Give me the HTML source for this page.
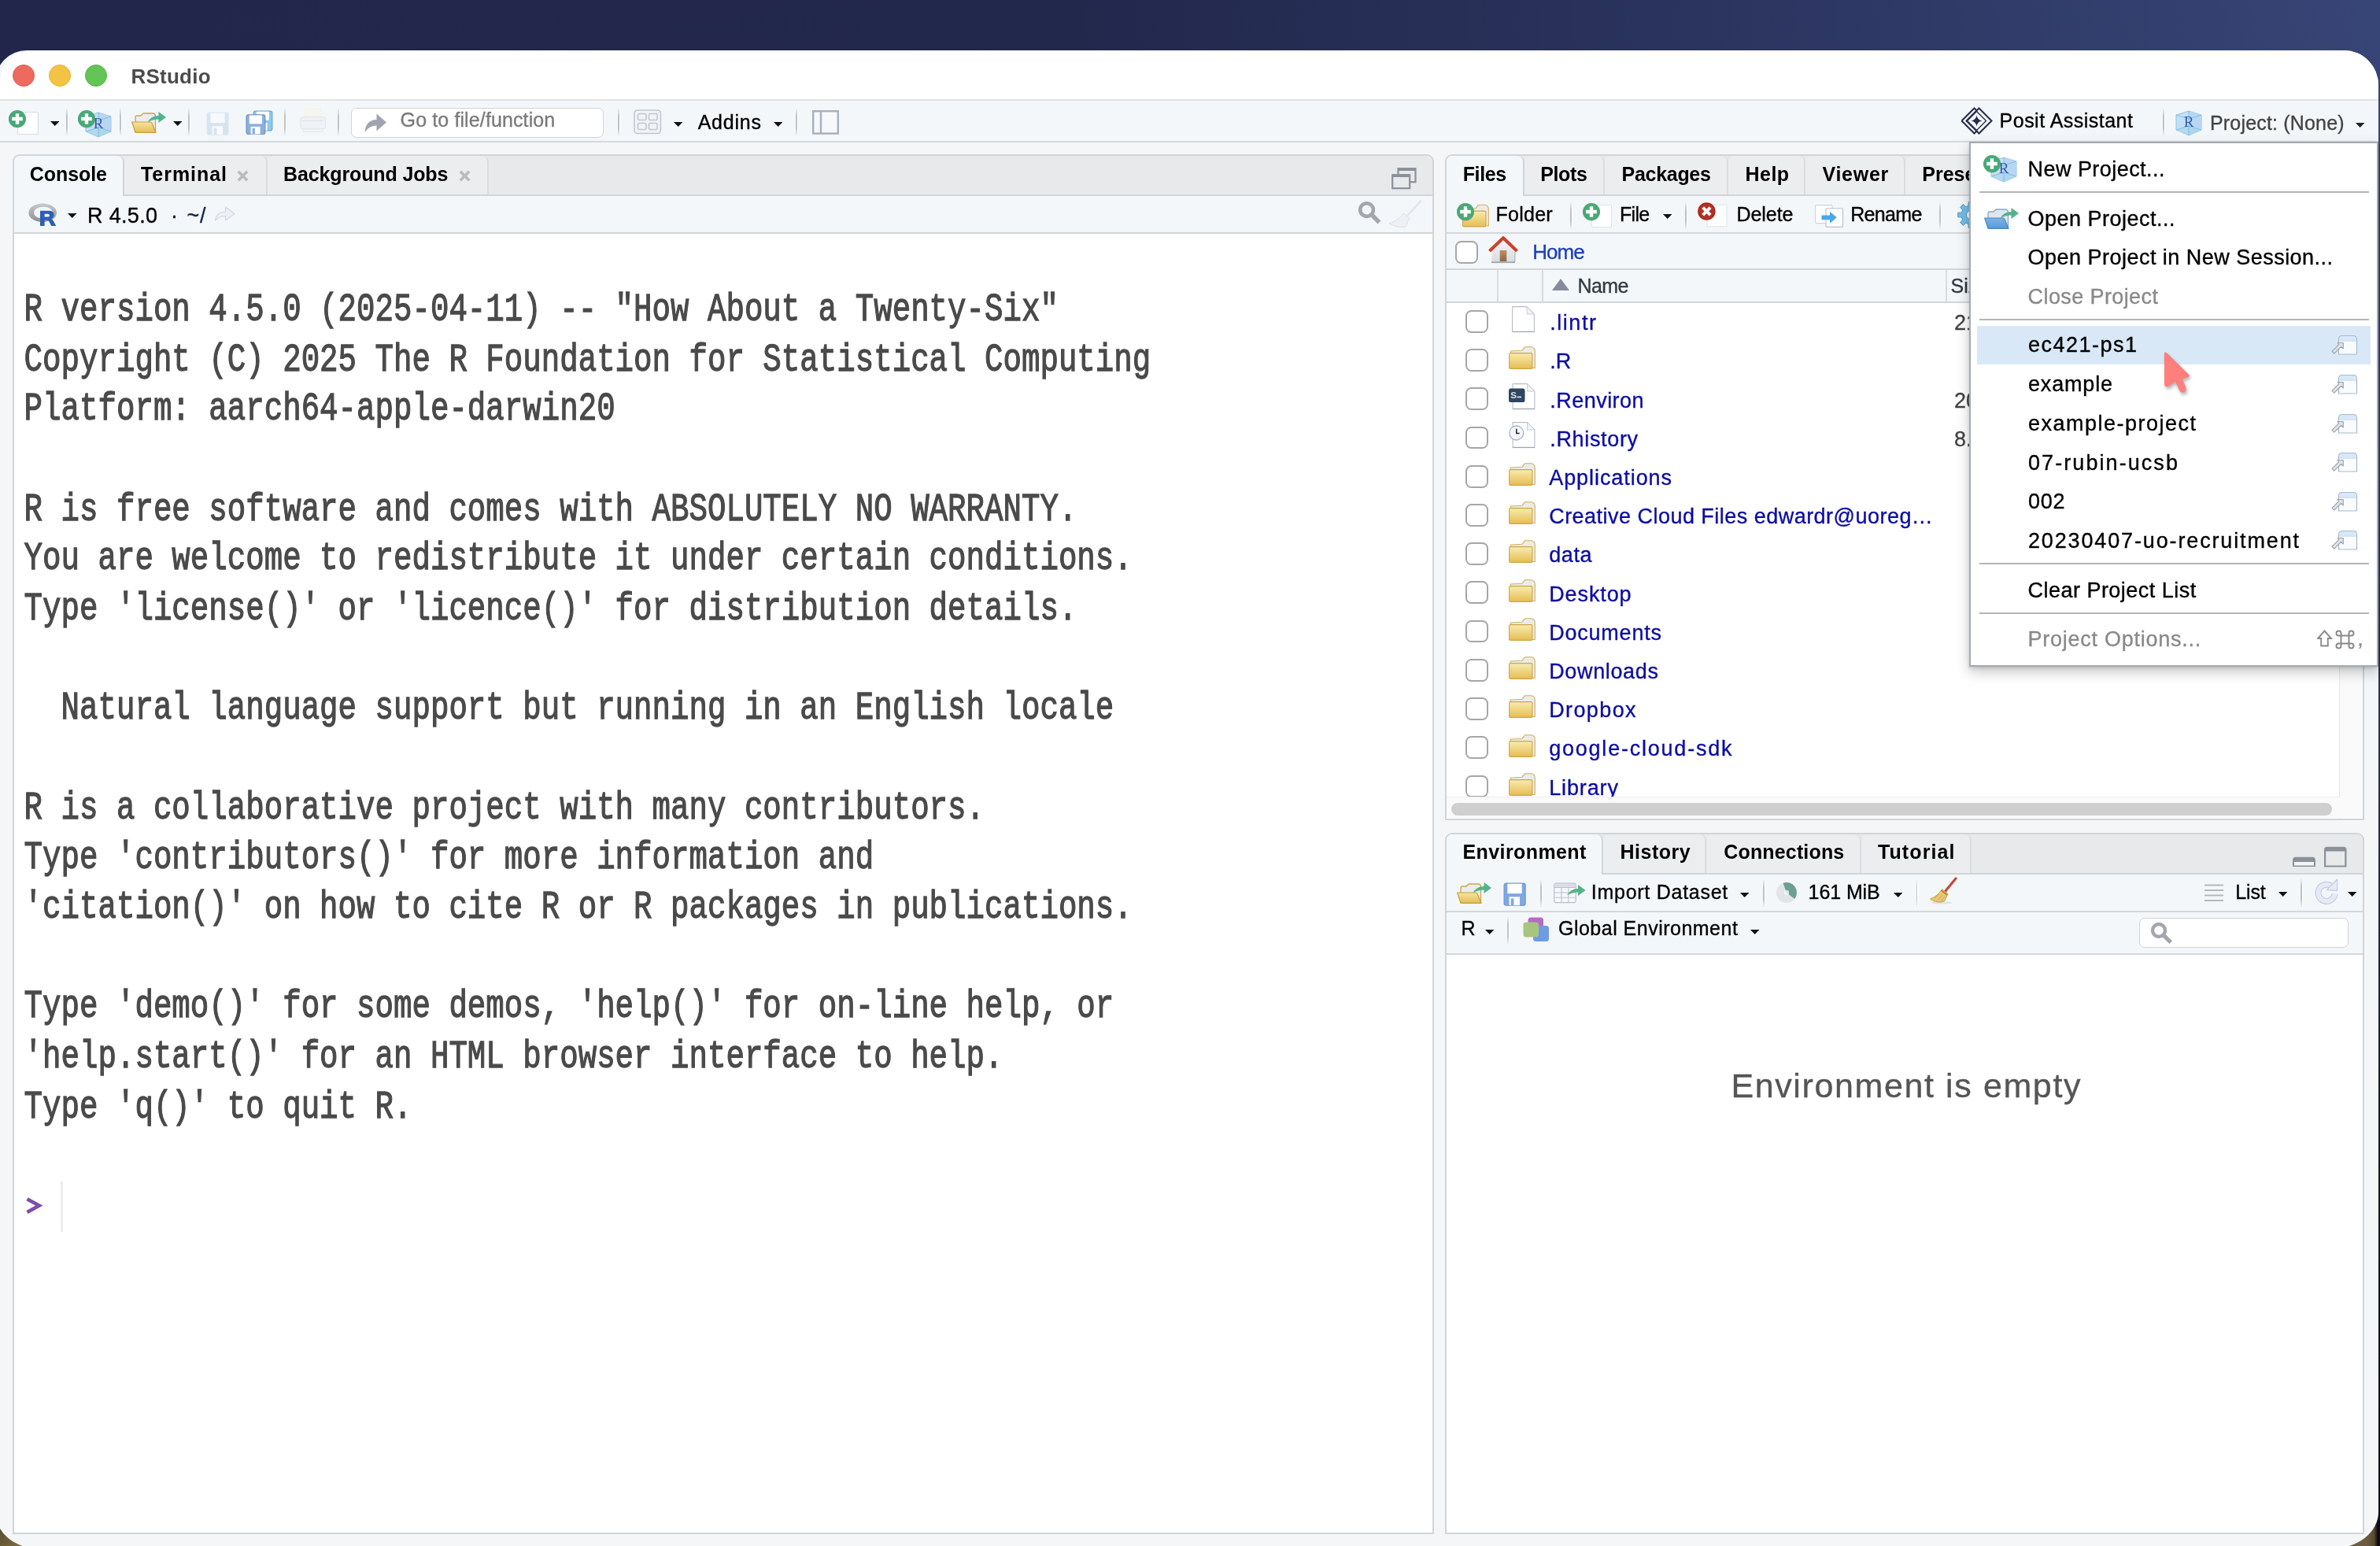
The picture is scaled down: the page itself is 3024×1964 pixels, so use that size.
<!DOCTYPE html>
<html><head><meta charset="utf-8"><title>RStudio</title>
<style>
html,body{margin:0;padding:0}
body{width:3024px;height:1964px;overflow:hidden;position:relative;font-family:"Liberation Sans",sans-serif;
background:linear-gradient(90deg,#21264a 0%,#22284c 45%,#2a335d 70%,#36437300 100%),linear-gradient(180deg,#374576 0%,#34416f 30%,#1a1d2a 70%,#0c0d11 100%);}
.t{position:absolute;white-space:nowrap;line-height:normal;font-family:"Liberation Sans",sans-serif}
#win{position:absolute;left:-6px;top:63.5px;width:3028px;height:1903px;border-radius:40px 44px 58px 54px/40px 44px 46px 46px;background:#f4f6f8;overflow:hidden}
#app{position:absolute;left:0;top:0;width:3024px;height:1964px;will-change:transform}
.pane{position:absolute;border:2px solid #d1d5d9;box-sizing:border-box;background:#fff;overflow:hidden;border-radius:9px 9px 0 0}
.strip{position:absolute;left:0;top:0;right:0;height:49px;background:#e8e9eb;border-bottom:2px solid #d1d5d9}
.tab{position:absolute;top:0;height:49px;box-sizing:border-box;background:#ecedef;border-right:2px solid #d9dcdf;border-radius:8px 8px 0 0}
.tab.on{background:#f4f7f9;height:51px;border-right:2px solid #d1d5d9}
.bar{position:absolute;left:0;right:0;background:#f4f7f9;border-bottom:2px solid #d3d7db;box-sizing:border-box}
#con{position:absolute;left:0;top:0;transform-origin:0 0;font-family:"Liberation Mono",monospace;white-space:pre;color:#4a4a4a;-webkit-text-stroke:1px #4a4a4a}
</style></head><body>
<div style="position:absolute;left:0px;top:1900px;width:80px;height:64px;background:linear-gradient(135deg,#3a3020,#7a6a42 60%,#a08a5a);"></div>
<div style="position:absolute;left:2950px;top:1890px;width:74px;height:74px;background:linear-gradient(90deg,#77664a 0%,#6a5a40 80%,#57492f 90%,#0c0d12 96%);"></div>
<div id="win"></div>
<div id="app">
<div style="position:absolute;left:0px;top:63.5px;width:3022px;height:63px;background:#fff;border-radius:40px 44px 0 0;"></div>
<div style="position:absolute;left:0px;top:126.3px;width:3022px;height:1.6px;background:#e2e2e2;"></div>
<div style="position:absolute;left:16.1px;top:82.1px;width:26.4px;height:26.4px;border-radius:50%;background:#ee6a5f;border:0.8px solid #e2584d;"></div>
<div style="position:absolute;left:62.1px;top:82.1px;width:26.4px;height:26.4px;border-radius:50%;background:#f5c344;border:0.8px solid #e4b031;"></div>
<div style="position:absolute;left:108.1px;top:82.1px;width:26.4px;height:26.4px;border-radius:50%;background:#62c555;border:0.8px solid #52b445;"></div>
<span class="t" style="left:166.50px;top:82.47px;font-size:26px;color:#4c4c4c;font-weight:700;letter-spacing:0.229px;">RStudio</span>
<div style="position:absolute;left:0px;top:128px;width:3022px;height:51px;background:#f4f7f9;"></div>
<div style="position:absolute;left:0px;top:179px;width:3022px;height:2px;background:#d5d9dc;"></div>
<svg style="position:absolute;left:11.2px;top:140.2px;" width="40" height="34" viewBox="0 0 40 34"><rect x="11.5" y="2.5" width="26" height="28" rx="1.5" fill="#fff" stroke="#d6dbe6" stroke-width="1.2"/><circle cx="11" cy="11.8" r="11" fill="#000" opacity=".15"/><circle cx="11" cy="11" r="11" fill="#48a877"/><path d="M4.18 8.8H8.8V4.18H13.2V8.8H17.82V13.2H13.2V17.82H8.8V13.2H4.18Z" fill="#fff"/></svg>
<svg style="position:absolute;left:63.8px;top:154.3px;" width="11.4" height="6" viewBox="0 0 11.4 6"><path d="M0 0H11.4L5.7 6Z" fill="#111"/></svg>
<div style="position:absolute;left:83.8px;top:137px;width:1.8px;height:36px;background:linear-gradient(180deg,rgba(190,195,200,0) 0%,rgba(190,195,200,1) 28%,rgba(190,195,200,1) 72%,rgba(190,195,200,0) 100%);"></div>
<div style="position:absolute;left:85.6px;top:137px;width:1.2px;height:36px;background:linear-gradient(180deg,rgba(255,255,255,0) 0%,rgba(255,255,255,.9) 28%,rgba(255,255,255,.9) 72%,rgba(255,255,255,0) 100%);"></div>
<svg style="position:absolute;left:99px;top:140.2px;" width="46" height="36" viewBox="0 0 46 36"><g opacity="1"><path d="M26.0 3.0L42.0 8.0L42.0 27.0L26.0 34.0L10.0 27.0L10.0 8.0Z" fill="#c5e0f4" stroke="#8ec3e6" stroke-width="1"/><path d="M26.0 3.0L42.0 8.0L42.0 27.0L26.0 34.0Z" fill="#b4d5f1" opacity=".8"/><path d="M10.0 27.0L26.0 22.0L42.0 27.0L26.0 34.0Z" fill="#a9d6ec" opacity=".7"/><path d="M26.0 3.0V34.0M10.0 8.0L26.0 13.0L42.0 8.0M10.0 27.0L26.0 22.0L42.0 27.0" fill="none" stroke="#7dbbe0" stroke-width=".9"/><text x="26.0" y="22.5" font-family="Liberation Serif, serif" font-size="19.0" fill="#3559b0" text-anchor="middle">R</text></g><circle cx="11" cy="11.8" r="11" fill="#000" opacity=".15"/><circle cx="11" cy="11" r="11" fill="#48a877"/><path d="M4.18 8.8H8.8V4.18H13.2V8.8H17.82V13.2H13.2V17.82H8.8V13.2H4.18Z" fill="#fff"/></svg>
<div style="position:absolute;left:151.8px;top:137px;width:1.8px;height:36px;background:linear-gradient(180deg,rgba(190,195,200,0) 0%,rgba(190,195,200,1) 28%,rgba(190,195,200,1) 72%,rgba(190,195,200,0) 100%);"></div>
<div style="position:absolute;left:153.6px;top:137px;width:1.2px;height:36px;background:linear-gradient(180deg,rgba(255,255,255,0) 0%,rgba(255,255,255,.9) 28%,rgba(255,255,255,.9) 72%,rgba(255,255,255,0) 100%);"></div>
<svg style="position:absolute;left:166.5px;top:142.2px;" width="46" height="30" viewBox="0 0 46 30"><defs><linearGradient id="gfy" x1="0" y1="0" x2="0" y2="1"><stop offset="0" stop-color="#f7e49c"/><stop offset="1" stop-color="#e2be58"/></linearGradient></defs><path d="M5 26V7Q5 5 7 5H12L15 2H27Q30 2 30.5 5V26Z" fill="#ececec" stroke="#c9a54c" stroke-width="1.3"/><path d="M0.7 13H24Q25.5 13 26 14.5L31 26.3H6.5Q5 26.3 4.5 24.8Z" fill="url(#gfy)" stroke="#c89f3c" stroke-width="1.2" stroke-linejoin="round"/><path d="M20.5 13.5Q24.5 5.0 34.5 5.0V0.0L44.0 7.0L34.5 14.0V9.5Q26.5 9.5 20.5 13.5Z" fill="#52b38a"/></svg>
<svg style="position:absolute;left:219.8px;top:154.3px;" width="11.4" height="6" viewBox="0 0 11.4 6"><path d="M0 0H11.4L5.7 6Z" fill="#111"/></svg>
<div style="position:absolute;left:239.3px;top:137px;width:1.8px;height:36px;background:linear-gradient(180deg,rgba(190,195,200,0) 0%,rgba(190,195,200,1) 28%,rgba(190,195,200,1) 72%,rgba(190,195,200,0) 100%);"></div>
<div style="position:absolute;left:241.1px;top:137px;width:1.2px;height:36px;background:linear-gradient(180deg,rgba(255,255,255,0) 0%,rgba(255,255,255,.9) 28%,rgba(255,255,255,.9) 72%,rgba(255,255,255,0) 100%);"></div>
<svg style="position:absolute;left:261.7px;top:142px;" width="30" height="30" viewBox="0 0 30 30"><g transform="translate(0.5,0.5)" opacity="1"><rect x="0.6" y="0.6" width="27.00" height="28.08" rx="2.5" fill="#d6e4f2" stroke="#dbe7f3" stroke-width="1.2"/><rect x="4.86" y="1.2" width="18.36" height="12.42" fill="#f7f9fc"/><rect x="7.02" y="17.82" width="13.50" height="10.80" fill="#f7f9fc"/><rect x="9.18" y="19.98" width="3.78" height="8.64" fill="#d6e4f2"/></g></svg>
<svg style="position:absolute;left:312px;top:139.8px;" width="36" height="32" viewBox="0 0 36 32"><g transform="translate(9.5,0.5)" opacity="1"><rect x="0.6" y="0.6" width="23.75" height="24.70" rx="2.5" fill="#8ccbee" stroke="#6aa6d8" stroke-width="1.2"/><rect x="4.27" y="1.2" width="16.15" height="10.92" fill="#fff"/><rect x="6.17" y="15.67" width="11.88" height="9.50" fill="#fff"/><rect x="8.07" y="17.57" width="3.32" height="7.60" fill="#8ccbee"/></g><g transform="translate(0.5,5.2)" opacity="1"><rect x="0.6" y="0.6" width="23.75" height="24.70" rx="2.5" fill="#8bb0dc" stroke="#6c92c6" stroke-width="1.2"/><rect x="4.27" y="1.2" width="16.15" height="10.92" fill="#fff"/><rect x="6.17" y="15.67" width="11.88" height="9.50" fill="#fff"/><rect x="8.07" y="17.57" width="3.32" height="7.60" fill="#8bb0dc"/></g></svg>
<div style="position:absolute;left:360.8px;top:137px;width:1.8px;height:36px;background:linear-gradient(180deg,rgba(190,195,200,0) 0%,rgba(190,195,200,1) 28%,rgba(190,195,200,1) 72%,rgba(190,195,200,0) 100%);"></div>
<div style="position:absolute;left:362.6px;top:137px;width:1.2px;height:36px;background:linear-gradient(180deg,rgba(255,255,255,0) 0%,rgba(255,255,255,.9) 28%,rgba(255,255,255,.9) 72%,rgba(255,255,255,0) 100%);"></div>
<svg style="position:absolute;left:381px;top:138.2px;" width="34" height="32" viewBox="0 0 34 32"><rect x="7" y="0.5" width="19.5" height="15" fill="#f6f6ee" stroke="#efefe6" stroke-width=".8"/><rect x="1" y="10.5" width="31.5" height="15.5" rx="3" fill="#eef1f5" stroke="#e1e5ea" stroke-width="1"/><path d="M3.5 15.5H30" stroke="#dde1e6" stroke-width="1"/><rect x="4.5" y="26" width="24.5" height="3.5" fill="#f0f2f5" stroke="#e3e6ea" stroke-width=".8"/></svg>
<div style="position:absolute;left:429.3px;top:137px;width:1.8px;height:36px;background:linear-gradient(180deg,rgba(190,195,200,0) 0%,rgba(190,195,200,1) 28%,rgba(190,195,200,1) 72%,rgba(190,195,200,0) 100%);"></div>
<div style="position:absolute;left:431.1px;top:137px;width:1.2px;height:36px;background:linear-gradient(180deg,rgba(255,255,255,0) 0%,rgba(255,255,255,.9) 28%,rgba(255,255,255,.9) 72%,rgba(255,255,255,0) 100%);"></div>
<div style="position:absolute;left:446px;top:136.6px;width:321px;height:38px;background:#fff;border:1.6px solid #d3d3d3;border-radius:7px;box-sizing:border-box;"></div>
<svg style="position:absolute;left:462px;top:141px;" width="30" height="28" viewBox="0 0 30 28"><path d="M1.5 27Q2.5 11.5 16.5 11V3.5L29 14.5L16.5 25.5V18.5Q7 18.5 1.5 27Z" fill="#a0a4b2"/></svg>
<span class="t" style="left:508.60px;top:138.18px;font-size:25px;color:#7b7b7b;-webkit-text-stroke:0.35px;letter-spacing:0.117px;">Go to file/function</span>
<div style="position:absolute;left:785.3px;top:137px;width:1.8px;height:36px;background:linear-gradient(180deg,rgba(190,195,200,0) 0%,rgba(190,195,200,1) 28%,rgba(190,195,200,1) 72%,rgba(190,195,200,0) 100%);"></div>
<div style="position:absolute;left:787.1px;top:137px;width:1.2px;height:36px;background:linear-gradient(180deg,rgba(255,255,255,0) 0%,rgba(255,255,255,.9) 28%,rgba(255,255,255,.9) 72%,rgba(255,255,255,0) 100%);"></div>
<svg style="position:absolute;left:805px;top:139.3px;" width="36" height="32" viewBox="0 0 36 32"><rect x="1" y="1" width="33.5" height="29.5" rx="4" fill="#f1f3f6" stroke="#c3c8d1" stroke-width="1.6"/><rect x="5.5" y="5.5" width="10.5" height="8" rx="1.5" fill="#f1f3f6" stroke="#c3c8d1" stroke-width="1.6"/><rect x="19.5" y="5.5" width="10.5" height="8" rx="1.5" fill="#f1f3f6" stroke="#c3c8d1" stroke-width="1.6"/><rect x="5.5" y="17.5" width="10.5" height="8" rx="1.5" fill="#f1f3f6" stroke="#c3c8d1" stroke-width="1.6"/><rect x="19.5" y="17.5" width="10.5" height="8" rx="1.5" fill="#f1f3f6" stroke="#c3c8d1" stroke-width="1.6"/></svg>
<svg style="position:absolute;left:856px;top:155.3px;" width="11.4" height="6" viewBox="0 0 11.4 6"><path d="M0 0H11.4L5.7 6Z" fill="#111"/></svg>
<span class="t" style="left:886.70px;top:140.68px;font-size:25px;color:#000;-webkit-text-stroke:0.35px;letter-spacing:0.760px;">Addins</span>
<svg style="position:absolute;left:983px;top:155.3px;" width="11.4" height="6" viewBox="0 0 11.4 6"><path d="M0 0H11.4L5.7 6Z" fill="#111"/></svg>
<div style="position:absolute;left:1011.3px;top:137px;width:1.8px;height:36px;background:linear-gradient(180deg,rgba(190,195,200,0) 0%,rgba(190,195,200,1) 28%,rgba(190,195,200,1) 72%,rgba(190,195,200,0) 100%);"></div>
<div style="position:absolute;left:1013.1px;top:137px;width:1.2px;height:36px;background:linear-gradient(180deg,rgba(255,255,255,0) 0%,rgba(255,255,255,.9) 28%,rgba(255,255,255,.9) 72%,rgba(255,255,255,0) 100%);"></div>
<svg style="position:absolute;left:1031.8px;top:139.5px;" width="34" height="31" viewBox="0 0 34 31"><rect x="1.2" y="1.2" width="31.6" height="28.4" fill="#f6f8fa" stroke="#a9afbd" stroke-width="2.4"/><path d="M11 1V30" stroke="#a9afbd" stroke-width="2.4"/></svg>
<svg style="position:absolute;left:2491.5px;top:136px;" width="40" height="36" viewBox="0 0 40 36"><path d="M16.5 1.5L32.5 17.5L16.5 33.5L0.5 17.5Z" fill="none" stroke="#262b4f" stroke-width="2"/><path d="M22.5 1.5L38.5 17.5L22.5 33.5L6.5 17.5Z" fill="#f4f7f9" stroke="#262b4f" stroke-width="2"/><path d="M19.5 5.5L31.5 17.5L19.5 29.5L7.5 17.5Z" fill="none" stroke="#262b4f" stroke-width="1.4"/><path d="M19.5 10.5Q20.5 16.5 26.5 17.5Q20.5 18.5 19.5 24.5Q18.5 18.5 12.5 17.5Q18.5 16.5 19.5 10.5Z" fill="#262b4f"/></svg>
<span class="t" style="left:2540.60px;top:138.68px;font-size:25px;color:#000;-webkit-text-stroke:0.35px;letter-spacing:0.484px;">Posit Assistant</span>
<div style="position:absolute;left:2747.8px;top:137px;width:1.8px;height:36px;background:linear-gradient(180deg,rgba(190,195,200,0) 0%,rgba(190,195,200,1) 28%,rgba(190,195,200,1) 72%,rgba(190,195,200,0) 100%);"></div>
<div style="position:absolute;left:2749.6px;top:137px;width:1.2px;height:36px;background:linear-gradient(180deg,rgba(255,255,255,0) 0%,rgba(255,255,255,.9) 28%,rgba(255,255,255,.9) 72%,rgba(255,255,255,0) 100%);"></div>
<svg style="position:absolute;left:2764px;top:139.5px;" width="34" height="34" viewBox="0 0 34 34"><g opacity="1"><path d="M17.0 1.0L33.0 6.0L33.0 25.0L17.0 32.0L1.0 25.0L1.0 6.0Z" fill="#c5e0f4" stroke="#8ec3e6" stroke-width="1"/><path d="M17.0 1.0L33.0 6.0L33.0 25.0L17.0 32.0Z" fill="#b4d5f1" opacity=".8"/><path d="M1.0 25.0L17.0 20.0L33.0 25.0L17.0 32.0Z" fill="#a9d6ec" opacity=".7"/><path d="M17.0 1.0V32.0M1.0 6.0L17.0 11.0L33.0 6.0M1.0 25.0L17.0 20.0L33.0 25.0" fill="none" stroke="#7dbbe0" stroke-width=".9"/><text x="17.0" y="20.5" font-family="Liberation Serif, serif" font-size="19.0" fill="#3559b0" text-anchor="middle">R</text></g></svg>
<span class="t" style="left:2808.00px;top:141.68px;font-size:25px;color:#444;-webkit-text-stroke:0.35px;letter-spacing:0.177px;">Project: (None)</span>
<svg style="position:absolute;left:2993px;top:156px;" width="11.4" height="6" viewBox="0 0 11.4 6"><path d="M0 0H11.4L5.7 6Z" fill="#222"/></svg>
<div class="pane" style="left:16px;top:196px;width:1805.5px;height:1753px">
<div class="strip"></div>
<div class="tab on" style="left:0;width:139.5px"></div><div class="tab" style="left:139.5px;width:182.0px"></div><div class="tab" style="left:321.5px;width:281.5px"></div>
<div class="bar" style="top:51px;height:48px"></div>
</div>
<span class="t" style="left:37.80px;top:207.38px;font-size:25px;color:#000;font-weight:700;letter-spacing:-0.071px;">Console</span>
<span class="t" style="left:179.00px;top:207.38px;font-size:25px;color:#000;font-weight:700;letter-spacing:0.946px;">Terminal</span>
<span class="t" style="left:360.00px;top:207.38px;font-size:25px;color:#000;font-weight:700;letter-spacing:-0.123px;">Background Jobs</span>
<svg style="position:absolute;left:300.5px;top:215.5px;" width="15" height="15" viewBox="0 0 15 15"><path d="M1.8 1.8L13.2 13.2M13.2 1.8L1.8 13.2" stroke="#b9bbbd" stroke-width="3.6"/></svg>
<svg style="position:absolute;left:582.5px;top:215.5px;" width="15" height="15" viewBox="0 0 15 15"><path d="M1.8 1.8L13.2 13.2M13.2 1.8L1.8 13.2" stroke="#b9bbbd" stroke-width="3.6"/></svg>
<svg style="position:absolute;left:1767.6px;top:212.5px;" width="32" height="28" viewBox="0 0 32 28"><rect x="8.5" y="1.2" width="22" height="17" fill="#e8e9eb" stroke="#8a9199" stroke-width="2.2"/><rect x="8.5" y="0.5" width="22" height="3.5" fill="#8a9199"/><rect x="1.2" y="9.2" width="22" height="17" fill="#e8e9eb" stroke="#8a9199" stroke-width="2.2"/><rect x="1.2" y="8.5" width="22" height="3.5" fill="#8a9199"/></svg>
<svg style="position:absolute;left:35.5px;top:257.8px;" width="38" height="30" viewBox="0 0 38 30"><defs><linearGradient id="gr1" x1="0" y1="0" x2="0" y2="1"><stop offset="0" stop-color="#c9c9cc"/><stop offset="1" stop-color="#8d8e93"/></linearGradient></defs><path d="M18 0.5C28 0.5 36 5.5 36 12.3C36 19 28 24 18 24C8 24 0.5 19 0.5 12.3C0.5 5.5 8 0.5 18 0.5ZM19.5 4.8C12 4.8 7.2 8 7.2 12.2C7.2 16.5 12 19.6 19.5 19.6C26.5 19.6 30.6 16.5 30.6 12.2C30.6 8 26.5 4.8 19.5 4.8Z" fill="url(#gr1)" fill-rule="evenodd"/><path d="M15 29V9.8H26Q32.5 9.8 32.5 15Q32.5 18.6 29 19.8Q30.6 20.4 31.6 22.2L35.3 29H29.2L26 22.8Q25.3 21.5 23.8 21.5H20.6V29ZM20.6 13.8V17.6H24.8Q27 17.6 27 15.7Q27 13.8 24.8 13.8Z" fill="#2c5fb4" fill-rule="evenodd"/></svg>
<svg style="position:absolute;left:86px;top:271px;" width="11.4" height="6" viewBox="0 0 11.4 6"><path d="M0 0H11.4L5.7 6Z" fill="#111"/></svg>
<span class="t" style="left:111.00px;top:259.37px;font-size:27px;color:#000;-webkit-text-stroke:0.35px;letter-spacing:0.333px;">R 4.5.0</span>
<span class="t" style="left:217.00px;top:259.37px;font-size:27px;color:#000;-webkit-text-stroke:0.35px;">·</span>
<span class="t" style="left:237.50px;top:259.37px;font-size:27px;color:#14284b;-webkit-text-stroke:0.35px;letter-spacing:0.825px;">~/</span>
<svg style="position:absolute;left:272px;top:260.5px;" width="28" height="21" viewBox="0 0 28 21"><path d="M1.5 19Q2.5 8.5 14.5 8V2L26 10.5L14.5 19V13.5Q7 13.5 1.5 19Z" fill="#eef0f6" stroke="#d3d7e2" stroke-width="1.2" stroke-linejoin="round"/></svg>
<svg style="position:absolute;left:1725px;top:255px;" width="30.800000000000004" height="30.800000000000004" viewBox="0 0 28 28"><circle cx="10.5" cy="10.5" r="7.6" fill="none" stroke="#a3a7ad" stroke-width="4.2"/><path d="M16.5 16.5L25 25" stroke="#a3a7ad" stroke-width="5" stroke-linecap="butt"/></svg>
<svg style="position:absolute;left:1764px;top:254px;" width="44" height="36" viewBox="0 0 44 36"><path d="M41 1.5L25 19" stroke="#e3e6ec" stroke-width="2.6" stroke-linecap="round"/><path d="M19 17L27 23L22 34Q12 36 1 30Q13 26 19 17Z" fill="#eef0f5" stroke="#dcdfe7" stroke-width="1"/></svg>
<div id="con" style="left:30.6px;top:363.40px;font-size:39.12px;line-height:48.669px;transform:scaleY(1.3)">R version 4.5.0 (2025-04-11) -- "How About a Twenty-Six"
Copyright (C) 2025 The R Foundation for Statistical Computing
Platform: aarch64-apple-darwin20

R is free software and comes with ABSOLUTELY NO WARRANTY.
You are welcome to redistribute it under certain conditions.
Type 'license()' or 'licence()' for distribution details.

  Natural language support but running in an English locale

R is a collaborative project with many contributors.
Type 'contributors()' for more information and
'citation()' on how to cite R or R packages in publications.

Type 'demo()' for some demos, 'help()' for on-line help, or
'help.start()' for an HTML browser interface to help.
Type 'q()' to quit R.
</div>
<svg style="position:absolute;left:30px;top:1518px;" width="26" height="28" viewBox="0 0 26 28"><path d="M4.5 5.2L19.8 13.6L4.5 22" fill="none" stroke="#7c4ea7" stroke-width="4.6"/></svg>
<div style="position:absolute;left:76.5px;top:1500.5px;width:3.5px;height:64px;background:#ececec;"></div>
<div class="pane" style="left:1836px;top:196px;width:1168px;height:845.5px">
<div class="strip"></div>
<div class="tab on" style="left:-2.0px;width:100.5px"></div><div class="tab" style="left:98.5px;width:102.7px"></div><div class="tab" style="left:201.2px;width:157.1px"></div><div class="tab" style="left:358.3px;width:97.7px"></div><div class="tab" style="left:456.0px;width:127.0px"></div><div class="tab" style="left:583.0px;width:219.0px"></div>
<div class="bar" style="top:51px;height:48px"></div>
<div class="bar" style="top:99px;height:46px"></div>
<div class="bar" style="top:145px;height:42px"></div>
<div style="position:absolute;left:63.5px;top:145px;width:2px;height:40px;background:#d9dde1"></div>
<div style="position:absolute;left:120.5px;top:145px;width:2px;height:40px;background:#d9dde1"></div>
<div style="position:absolute;left:633.5px;top:145px;width:2px;height:40px;background:#d9dde1"></div>
<div style="position:absolute;left:1134.0px;top:187px;width:30px;bottom:0;background:#fafafa;border-left:1.5px solid #e8e8e8"></div>
</div>
<span class="t" style="left:1858.70px;top:207.18px;font-size:25px;color:#000;font-weight:700;letter-spacing:-0.375px;">Files</span>
<span class="t" style="left:1957.20px;top:207.18px;font-size:25px;color:#000;font-weight:700;letter-spacing:-0.381px;">Plots</span>
<span class="t" style="left:2060.50px;top:207.18px;font-size:25px;color:#000;font-weight:700;letter-spacing:-0.282px;">Packages</span>
<span class="t" style="left:2217.60px;top:207.18px;font-size:25px;color:#000;font-weight:700;letter-spacing:0.458px;">Help</span>
<span class="t" style="left:2315.50px;top:207.18px;font-size:25px;color:#000;font-weight:700;letter-spacing:0.715px;">Viewer</span>
<span class="t" style="left:2442.30px;top:207.18px;font-size:25px;color:#000;font-weight:700;">Presentation</span>
<svg style="position:absolute;left:1851px;top:257.7px;" width="44" height="34" viewBox="0 0 44 34"><defs><linearGradient id="gfn" x1="0" y1="0" x2="0" y2="1"><stop offset="0" stop-color="#f8ecb0"/><stop offset="1" stop-color="#e6bd52"/></linearGradient></defs><path d="M9.5 28.5V7.5L24 6.7L27.5 2.3H36Q40 3.0 40.3 7.5V29.0Z" fill="#ebebea" stroke="#d0b062" stroke-width="1.1" stroke-linejoin="round"/><rect x="7.6" y="10.1" width="29.3" height="19.8" rx="1.5" fill="url(#gfn)" stroke="#cfa546" stroke-width="1.1"/><circle cx="11" cy="11.8" r="11" fill="#000" opacity=".15"/><circle cx="11" cy="11" r="11" fill="#48a877"/><path d="M4.18 8.8H8.8V4.18H13.2V8.8H17.82V13.2H13.2V17.82H8.8V13.2H4.18Z" fill="#fff"/></svg>
<span class="t" style="left:1900.60px;top:257.68px;font-size:25px;color:#000;-webkit-text-stroke:0.35px;letter-spacing:0.225px;">Folder</span>
<div style="position:absolute;left:1994.8px;top:256px;width:1.8px;height:36px;background:linear-gradient(180deg,rgba(190,195,200,0) 0%,rgba(190,195,200,1) 28%,rgba(190,195,200,1) 72%,rgba(190,195,200,0) 100%);"></div>
<div style="position:absolute;left:1996.6px;top:256px;width:1.2px;height:36px;background:linear-gradient(180deg,rgba(255,255,255,0) 0%,rgba(255,255,255,.9) 28%,rgba(255,255,255,.9) 72%,rgba(255,255,255,0) 100%);"></div>
<svg style="position:absolute;left:2011px;top:257.7px;" width="40" height="34" viewBox="0 0 40 34"><rect x="11.5" y="2.5" width="25" height="28" rx="1.5" fill="#fff" stroke="#dfe3ea" stroke-width="1.2"/><circle cx="11" cy="11.8" r="11" fill="#000" opacity=".15"/><circle cx="11" cy="11" r="11" fill="#48a877"/><path d="M4.18 8.8H8.8V4.18H13.2V8.8H17.82V13.2H13.2V17.82H8.8V13.2H4.18Z" fill="#fff"/></svg>
<span class="t" style="left:2057.90px;top:257.68px;font-size:25px;color:#000;-webkit-text-stroke:0.35px;letter-spacing:-0.650px;">File</span>
<svg style="position:absolute;left:2112.5px;top:272px;" width="11.4" height="6" viewBox="0 0 11.4 6"><path d="M0 0H11.4L5.7 6Z" fill="#111"/></svg>
<div style="position:absolute;left:2140.8px;top:256px;width:1.8px;height:36px;background:linear-gradient(180deg,rgba(190,195,200,0) 0%,rgba(190,195,200,1) 28%,rgba(190,195,200,1) 72%,rgba(190,195,200,0) 100%);"></div>
<div style="position:absolute;left:2142.6px;top:256px;width:1.2px;height:36px;background:linear-gradient(180deg,rgba(255,255,255,0) 0%,rgba(255,255,255,.9) 28%,rgba(255,255,255,.9) 72%,rgba(255,255,255,0) 100%);"></div>
<svg style="position:absolute;left:2156.5px;top:257.4px;" width="40" height="34" viewBox="0 0 40 34"><rect x="12" y="3.2" width="25" height="27.5" rx="1" fill="#fff" stroke="#dfe3ea" stroke-width="1.1"/><circle cx="11.4" cy="12.3" r="11.2" fill="#000" opacity=".14"/><circle cx="11.4" cy="11.4" r="11.2" fill="#a8281e"/><circle cx="11.4" cy="11.4" r="9.6" fill="#b53024"/><path d="M6.7 6.7L16.1 16.1M16.1 6.7L6.7 16.1" stroke="#fff" stroke-width="4"/></svg>
<span class="t" style="left:2206.50px;top:257.68px;font-size:25px;color:#000;-webkit-text-stroke:0.35px;letter-spacing:-0.050px;">Delete</span>
<svg style="position:absolute;left:2306px;top:259.8px;" width="37" height="30" viewBox="0 0 37 30"><rect x="0.6" y="0.6" width="21.5" height="23" rx="1" fill="#fff" stroke="#cfd4dc" stroke-width="1.1"/><rect x="14" y="4.8" width="21.5" height="23.6" rx="1" fill="#fff" stroke="#b9bfca" stroke-width="1.1"/><path d="M8.5 13.5H19V8.8L27.8 16.3L19 23.8V19.2H8.5Z" fill="#4aa8e8"/></svg>
<span class="t" style="left:2351.20px;top:257.68px;font-size:25px;color:#000;-webkit-text-stroke:0.35px;letter-spacing:-0.660px;">Rename</span>
<div style="position:absolute;left:2464.3px;top:256px;width:1.8px;height:36px;background:linear-gradient(180deg,rgba(190,195,200,0) 0%,rgba(190,195,200,1) 28%,rgba(190,195,200,1) 72%,rgba(190,195,200,0) 100%);"></div>
<div style="position:absolute;left:2466.1px;top:256px;width:1.2px;height:36px;background:linear-gradient(180deg,rgba(255,255,255,0) 0%,rgba(255,255,255,.9) 28%,rgba(255,255,255,.9) 72%,rgba(255,255,255,0) 100%);"></div>
<svg style="position:absolute;left:2486.5px;top:255.5px;" width="34" height="34" viewBox="0 0 34 34"><path d="M33.3 14.2L33.3 19.8L28.7 19.9L27.3 23.2L30.5 26.5L26.5 30.5L23.2 27.3L19.9 28.7L19.8 33.3L14.2 33.3L14.1 28.7L10.8 27.3L7.5 30.5L3.5 26.5L6.7 23.2L5.3 19.9L0.7 19.8L0.7 14.2L5.3 14.1L6.7 10.8L3.5 7.5L7.5 3.5L10.8 6.7L14.1 5.3L14.2 0.7L19.8 0.7L19.9 5.3L23.2 6.7L26.5 3.5L30.5 7.5L27.3 10.8L28.7 14.1Z" fill="#74bde6" stroke="#4e9ccf" stroke-width="1"/><circle cx="17" cy="17" r="5.6" fill="#f4f7f9" stroke="#4e9ccf" stroke-width="1"/></svg>
<div style="position:absolute;left:1849px;top:306px;width:25px;height:25px;border:2px solid #a6a6a6;border-radius:7.5px;background:#fff"></div>
<svg style="position:absolute;left:1891px;top:300.3px;" width="39" height="35" viewBox="0 0 39 35"><defs><linearGradient id="ghm" x1="0" y1="0" x2="0" y2="1"><stop offset="0" stop-color="#f4f5f8"/><stop offset="1" stop-color="#d9dbe1"/></linearGradient><linearGradient id="ghd" x1="0" y1="0" x2="0" y2="1"><stop offset="0" stop-color="#bd9163"/><stop offset="1" stop-color="#8f673f"/></linearGradient></defs><path d="M4.5 19L19 5.5L33.5 19V32.5H4.5Z" fill="url(#ghm)"/><path d="M4 33.2H34" stroke="#98a5ab" stroke-width="1.8"/><path d="M33.8 20V33" stroke="#aab3b9" stroke-width="1.2"/><rect x="14.7" y="18" width="8.6" height="14" fill="url(#ghd)"/><path d="M1.5 19L19 2.3L36.5 19" fill="none" stroke="#c8432c" stroke-width="4.2" stroke-linejoin="miter"/></svg>
<span class="t" style="left:1947.20px;top:305.37px;font-size:26px;color:#1b3fb8;-webkit-text-stroke:0.35px;letter-spacing:-0.925px;">Home</span>
<svg style="position:absolute;left:1972.4px;top:354px;" width="22" height="15" viewBox="0 0 22 15"><path d="M11 0L22 15H0Z" fill="#858b9c"/></svg>
<span class="t" style="left:2004.40px;top:348.88px;font-size:25px;color:#2f3a45;-webkit-text-stroke:0.35px;letter-spacing:-0.550px;">Name</span>
<span class="t" style="left:2478.60px;top:348.88px;font-size:25px;color:#2f3a45;-webkit-text-stroke:0.35px;">Size</span>
<div style="position:absolute;left:1862px;top:393.9px;width:24.8px;height:24.8px;border:2px solid #a6a6a6;border-radius:7.5px;background:#fff"></div>
<svg style="position:absolute;left:1920.8px;top:388.7px;" width="30" height="34" viewBox="0 0 30 34"><path d="M0.6 0.6H19L28.4 10V32.4H0.6Z" fill="#fff" stroke="#b9bdc6" stroke-width="1.1" stroke-linejoin="round"/><path d="M19 0.6V10H28.4Z" fill="#f1f2f5" stroke="#c4c8d0" stroke-width=".9" stroke-linejoin="round"/><path d="M0.6 32.6H28.4" stroke="#9ea3ad" stroke-width="1"/></svg>
<span class="t" style="left:1969.30px;top:395.06px;font-size:27px;color:#0d0da3;-webkit-text-stroke:0.35px;letter-spacing:1.520px;">.lintr</span>
<span class="t" style="left:2483.00px;top:395.06px;font-size:27px;color:#444;-webkit-text-stroke:0.35px;">21 B</span>
<div style="position:absolute;left:1862px;top:443.12px;width:24.8px;height:24.8px;border:2px solid #a6a6a6;border-radius:7.5px;background:#fff"></div>
<svg style="position:absolute;left:1916.6px;top:440.32000000000005px;" width="35" height="30" viewBox="0 0 35 30"><defs><linearGradient id="gfc1" x1="0" y1="0" x2="0" y2="1"><stop offset="0" stop-color="#f8ecb0"/><stop offset="1" stop-color="#e6bd52"/></linearGradient></defs><path d="M2.5 27V6L17 5.2L20.5 0.8H29Q33 1.5 33.3 6V27.5Z" fill="#ebebea" stroke="#d0b062" stroke-width="1.1" stroke-linejoin="round"/><rect x="0.6" y="8.6" width="29.3" height="19.8" rx="1.5" fill="url(#gfc1)" stroke="#cfa546" stroke-width="1.1"/></svg>
<span class="t" style="left:1969.30px;top:444.29px;font-size:27px;color:#0d0da3;-webkit-text-stroke:0.35px;">.R</span>
<div style="position:absolute;left:1862px;top:492.34000000000003px;width:24.8px;height:24.8px;border:2px solid #a6a6a6;border-radius:7.5px;background:#fff"></div>
<svg style="position:absolute;left:1916.6px;top:487.14000000000004px;" width="35" height="34" viewBox="0 0 35 34"><path d="M5.1 0.6H23.5L32.9 10V32.4H5.1Z" fill="#fff" stroke="#b9bdc6" stroke-width="1.1" stroke-linejoin="round"/><path d="M23.5 0.6V10H32.9Z" fill="#f1f2f5" stroke="#c4c8d0" stroke-width=".9" stroke-linejoin="round"/><path d="M5.1 32.6H32.9" stroke="#9ea3ad" stroke-width="1"/><rect x="0" y="6.5" width="20.5" height="17.5" rx="2.5" fill="#2f4560"/><text x="2.2" y="18.6" font-family="Liberation Sans, sans-serif" font-weight="700" font-size="11.5" fill="#d9dfe8">S</text><rect x="10.5" y="16.5" width="5.5" height="1.8" fill="#d9dfe8"/></svg>
<span class="t" style="left:1969.30px;top:493.51px;font-size:27px;color:#0d0da3;-webkit-text-stroke:0.35px;letter-spacing:0.463px;">.Renviron</span>
<span class="t" style="left:2483.00px;top:493.51px;font-size:27px;color:#444;-webkit-text-stroke:0.35px;">20 B</span>
<div style="position:absolute;left:1862px;top:541.56px;width:24.8px;height:24.8px;border:2px solid #a6a6a6;border-radius:7.5px;background:#fff"></div>
<svg style="position:absolute;left:1916.6px;top:536.36px;" width="35" height="34" viewBox="0 0 35 34"><path d="M5.1 0.6H23.5L32.9 10V32.4H5.1Z" fill="#fff" stroke="#b9bdc6" stroke-width="1.1" stroke-linejoin="round"/><path d="M23.5 0.6V10H32.9Z" fill="#f1f2f5" stroke="#c4c8d0" stroke-width=".9" stroke-linejoin="round"/><path d="M5.1 32.6H32.9" stroke="#9ea3ad" stroke-width="1"/><circle cx="9.8" cy="14" r="9" fill="#f4f6fb" stroke="#aab1c6" stroke-width="1.3"/><path d="M9.8 8.8V14.6H13.6" fill="none" stroke="#222" stroke-width="1.5"/></svg>
<span class="t" style="left:1969.30px;top:542.72px;font-size:27px;color:#0d0da3;-webkit-text-stroke:0.35px;letter-spacing:0.662px;">.Rhistory</span>
<span class="t" style="left:2483.00px;top:542.72px;font-size:27px;color:#444;-webkit-text-stroke:0.35px;">8.5 KB</span>
<div style="position:absolute;left:1862px;top:590.78px;width:24.8px;height:24.8px;border:2px solid #a6a6a6;border-radius:7.5px;background:#fff"></div>
<svg style="position:absolute;left:1916.6px;top:587.98px;" width="35" height="30" viewBox="0 0 35 30"><defs><linearGradient id="gfc4" x1="0" y1="0" x2="0" y2="1"><stop offset="0" stop-color="#f8ecb0"/><stop offset="1" stop-color="#e6bd52"/></linearGradient></defs><path d="M2.5 27V6L17 5.2L20.5 0.8H29Q33 1.5 33.3 6V27.5Z" fill="#ebebea" stroke="#d0b062" stroke-width="1.1" stroke-linejoin="round"/><rect x="0.6" y="8.6" width="29.3" height="19.8" rx="1.5" fill="url(#gfc4)" stroke="#cfa546" stroke-width="1.1"/></svg>
<span class="t" style="left:1968.20px;top:591.94px;font-size:27px;color:#0d0da3;-webkit-text-stroke:0.35px;letter-spacing:0.934px;">Applications</span>
<div style="position:absolute;left:1862px;top:640.0px;width:24.8px;height:24.8px;border:2px solid #a6a6a6;border-radius:7.5px;background:#fff"></div>
<svg style="position:absolute;left:1916.6px;top:637.2px;" width="35" height="30" viewBox="0 0 35 30"><defs><linearGradient id="gfc5" x1="0" y1="0" x2="0" y2="1"><stop offset="0" stop-color="#f8ecb0"/><stop offset="1" stop-color="#e6bd52"/></linearGradient></defs><path d="M2.5 27V6L17 5.2L20.5 0.8H29Q33 1.5 33.3 6V27.5Z" fill="#ebebea" stroke="#d0b062" stroke-width="1.1" stroke-linejoin="round"/><rect x="0.6" y="8.6" width="29.3" height="19.8" rx="1.5" fill="url(#gfc5)" stroke="#cfa546" stroke-width="1.1"/></svg>
<span class="t" style="left:1968.20px;top:641.16px;font-size:27px;color:#0d0da3;-webkit-text-stroke:0.35px;letter-spacing:0.473px;">Creative Cloud Files edwardr@uoreg…</span>
<div style="position:absolute;left:1862px;top:689.2199999999999px;width:24.8px;height:24.8px;border:2px solid #a6a6a6;border-radius:7.5px;background:#fff"></div>
<svg style="position:absolute;left:1916.6px;top:686.42px;" width="35" height="30" viewBox="0 0 35 30"><defs><linearGradient id="gfc6" x1="0" y1="0" x2="0" y2="1"><stop offset="0" stop-color="#f8ecb0"/><stop offset="1" stop-color="#e6bd52"/></linearGradient></defs><path d="M2.5 27V6L17 5.2L20.5 0.8H29Q33 1.5 33.3 6V27.5Z" fill="#ebebea" stroke="#d0b062" stroke-width="1.1" stroke-linejoin="round"/><rect x="0.6" y="8.6" width="29.3" height="19.8" rx="1.5" fill="url(#gfc6)" stroke="#cfa546" stroke-width="1.1"/></svg>
<span class="t" style="left:1968.20px;top:690.38px;font-size:27px;color:#0d0da3;-webkit-text-stroke:0.35px;letter-spacing:0.592px;">data</span>
<div style="position:absolute;left:1862px;top:738.4399999999999px;width:24.8px;height:24.8px;border:2px solid #a6a6a6;border-radius:7.5px;background:#fff"></div>
<svg style="position:absolute;left:1916.6px;top:735.64px;" width="35" height="30" viewBox="0 0 35 30"><defs><linearGradient id="gfc7" x1="0" y1="0" x2="0" y2="1"><stop offset="0" stop-color="#f8ecb0"/><stop offset="1" stop-color="#e6bd52"/></linearGradient></defs><path d="M2.5 27V6L17 5.2L20.5 0.8H29Q33 1.5 33.3 6V27.5Z" fill="#ebebea" stroke="#d0b062" stroke-width="1.1" stroke-linejoin="round"/><rect x="0.6" y="8.6" width="29.3" height="19.8" rx="1.5" fill="url(#gfc7)" stroke="#cfa546" stroke-width="1.1"/></svg>
<span class="t" style="left:1968.20px;top:739.61px;font-size:27px;color:#0d0da3;-webkit-text-stroke:0.35px;letter-spacing:0.900px;">Desktop</span>
<div style="position:absolute;left:1862px;top:787.66px;width:24.8px;height:24.8px;border:2px solid #a6a6a6;border-radius:7.5px;background:#fff"></div>
<svg style="position:absolute;left:1916.6px;top:784.86px;" width="35" height="30" viewBox="0 0 35 30"><defs><linearGradient id="gfc8" x1="0" y1="0" x2="0" y2="1"><stop offset="0" stop-color="#f8ecb0"/><stop offset="1" stop-color="#e6bd52"/></linearGradient></defs><path d="M2.5 27V6L17 5.2L20.5 0.8H29Q33 1.5 33.3 6V27.5Z" fill="#ebebea" stroke="#d0b062" stroke-width="1.1" stroke-linejoin="round"/><rect x="0.6" y="8.6" width="29.3" height="19.8" rx="1.5" fill="url(#gfc8)" stroke="#cfa546" stroke-width="1.1"/></svg>
<span class="t" style="left:1968.20px;top:788.83px;font-size:27px;color:#0d0da3;-webkit-text-stroke:0.35px;letter-spacing:0.775px;">Documents</span>
<div style="position:absolute;left:1862px;top:836.88px;width:24.8px;height:24.8px;border:2px solid #a6a6a6;border-radius:7.5px;background:#fff"></div>
<svg style="position:absolute;left:1916.6px;top:834.08px;" width="35" height="30" viewBox="0 0 35 30"><defs><linearGradient id="gfc9" x1="0" y1="0" x2="0" y2="1"><stop offset="0" stop-color="#f8ecb0"/><stop offset="1" stop-color="#e6bd52"/></linearGradient></defs><path d="M2.5 27V6L17 5.2L20.5 0.8H29Q33 1.5 33.3 6V27.5Z" fill="#ebebea" stroke="#d0b062" stroke-width="1.1" stroke-linejoin="round"/><rect x="0.6" y="8.6" width="29.3" height="19.8" rx="1.5" fill="url(#gfc9)" stroke="#cfa546" stroke-width="1.1"/></svg>
<span class="t" style="left:1968.20px;top:838.05px;font-size:27px;color:#0d0da3;-webkit-text-stroke:0.35px;letter-spacing:0.647px;">Downloads</span>
<div style="position:absolute;left:1862px;top:886.1px;width:24.8px;height:24.8px;border:2px solid #a6a6a6;border-radius:7.5px;background:#fff"></div>
<svg style="position:absolute;left:1916.6px;top:883.3000000000001px;" width="35" height="30" viewBox="0 0 35 30"><defs><linearGradient id="gfc10" x1="0" y1="0" x2="0" y2="1"><stop offset="0" stop-color="#f8ecb0"/><stop offset="1" stop-color="#e6bd52"/></linearGradient></defs><path d="M2.5 27V6L17 5.2L20.5 0.8H29Q33 1.5 33.3 6V27.5Z" fill="#ebebea" stroke="#d0b062" stroke-width="1.1" stroke-linejoin="round"/><rect x="0.6" y="8.6" width="29.3" height="19.8" rx="1.5" fill="url(#gfc10)" stroke="#cfa546" stroke-width="1.1"/></svg>
<span class="t" style="left:1968.20px;top:887.27px;font-size:27px;color:#0d0da3;-webkit-text-stroke:0.35px;letter-spacing:1.383px;">Dropbox</span>
<div style="position:absolute;left:1862px;top:935.3199999999999px;width:24.8px;height:24.8px;border:2px solid #a6a6a6;border-radius:7.5px;background:#fff"></div>
<svg style="position:absolute;left:1916.6px;top:932.52px;" width="35" height="30" viewBox="0 0 35 30"><defs><linearGradient id="gfc11" x1="0" y1="0" x2="0" y2="1"><stop offset="0" stop-color="#f8ecb0"/><stop offset="1" stop-color="#e6bd52"/></linearGradient></defs><path d="M2.5 27V6L17 5.2L20.5 0.8H29Q33 1.5 33.3 6V27.5Z" fill="#ebebea" stroke="#d0b062" stroke-width="1.1" stroke-linejoin="round"/><rect x="0.6" y="8.6" width="29.3" height="19.8" rx="1.5" fill="url(#gfc11)" stroke="#cfa546" stroke-width="1.1"/></svg>
<span class="t" style="left:1968.20px;top:936.48px;font-size:27px;color:#0d0da3;-webkit-text-stroke:0.35px;letter-spacing:1.777px;">google-cloud-sdk</span>
<div style="position:absolute;left:1862px;top:984.54px;width:24.8px;height:24.8px;border:2px solid #a6a6a6;border-radius:7.5px;background:#fff"></div>
<svg style="position:absolute;left:1916.6px;top:981.74px;" width="35" height="30" viewBox="0 0 35 30"><defs><linearGradient id="gfc12" x1="0" y1="0" x2="0" y2="1"><stop offset="0" stop-color="#f8ecb0"/><stop offset="1" stop-color="#e6bd52"/></linearGradient></defs><path d="M2.5 27V6L17 5.2L20.5 0.8H29Q33 1.5 33.3 6V27.5Z" fill="#ebebea" stroke="#d0b062" stroke-width="1.1" stroke-linejoin="round"/><rect x="0.6" y="8.6" width="29.3" height="19.8" rx="1.5" fill="url(#gfc12)" stroke="#cfa546" stroke-width="1.1"/></svg>
<span class="t" style="left:1968.20px;top:985.70px;font-size:27px;color:#0d0da3;-webkit-text-stroke:0.35px;letter-spacing:0.867px;">Library</span>
<div style="position:absolute;left:1838px;top:1012px;width:1134.5px;height:26px;background:rgba(250,250,250,.93);border-top:1.5px solid #ededed;"></div>
<div style="position:absolute;left:1844px;top:1019.5px;width:1119px;height:16px;border-radius:8px;background:#cfcfcf;"></div>
<div class="pane" style="left:1836px;top:1058px;width:1168px;height:891px">
<div class="strip"></div>
<div class="tab on" style="left:-2.0px;width:201.3px"></div><div class="tab" style="left:199.3px;width:131.2px"></div><div class="tab" style="left:330.5px;width:196.0px"></div><div class="tab" style="left:526.5px;width:140.3px"></div>
<div class="bar" style="top:51px;height:48px"></div>
<div class="bar" style="top:99px;height:53.5px"></div>
</div>
<span class="t" style="left:1858.50px;top:1067.97px;font-size:25px;color:#000;font-weight:700;letter-spacing:0.405px;">Environment</span>
<span class="t" style="left:2058.50px;top:1067.97px;font-size:25px;color:#000;font-weight:700;letter-spacing:0.496px;">History</span>
<span class="t" style="left:2190.30px;top:1067.97px;font-size:25px;color:#000;font-weight:700;letter-spacing:0.153px;">Connections</span>
<span class="t" style="left:2385.90px;top:1067.97px;font-size:25px;color:#000;font-weight:700;letter-spacing:1.121px;">Tutorial</span>
<svg style="position:absolute;left:2912px;top:1088px;" width="32" height="14" viewBox="0 0 32 14"><path d="M1 13V5Q1 0.8 5 0.8H26Q30 0.8 30 5V13Z" fill="#8a9199"/><rect x="3" y="7" width="25" height="4.5" fill="#f4f5f6"/></svg>
<svg style="position:absolute;left:2952px;top:1074.5px;" width="31" height="28" viewBox="0 0 31 28"><path d="M1 26.5V4.5Q1 0.8 5 0.8H25.5Q29.5 0.8 29.5 4.5V26.5Z" fill="#8a9199"/><rect x="3.2" y="6.5" width="24" height="18" fill="#e8e9eb"/></svg>
<svg style="position:absolute;left:1850.5px;top:1120.5px;" width="46" height="30" viewBox="0 0 46 30"><defs><linearGradient id="gfy" x1="0" y1="0" x2="0" y2="1"><stop offset="0" stop-color="#f7e49c"/><stop offset="1" stop-color="#e2be58"/></linearGradient></defs><path d="M5 26V7Q5 5 7 5H12L15 2H27Q30 2 30.5 5V26Z" fill="#ececec" stroke="#c9a54c" stroke-width="1.3"/><path d="M0.7 13H24Q25.5 13 26 14.5L31 26.3H6.5Q5 26.3 4.5 24.8Z" fill="url(#gfy)" stroke="#c89f3c" stroke-width="1.2" stroke-linejoin="round"/><path d="M20.5 13.5Q24.5 5.0 34.5 5.0V0.0L44.0 7.0L34.5 14.0V9.5Q26.5 9.5 20.5 13.5Z" fill="#52b38a"/></svg>
<svg style="position:absolute;left:1910.4px;top:1120.5px;" width="30" height="30" viewBox="0 0 30 30"><g transform="translate(0.5,0.5)" opacity="1"><rect x="0.6" y="0.6" width="27.00" height="28.08" rx="2.5" fill="#7da9e0" stroke="#6b97d2" stroke-width="1.2"/><rect x="4.86" y="1.2" width="18.36" height="12.42" fill="#fff"/><rect x="7.02" y="17.82" width="13.50" height="10.80" fill="#fff"/><rect x="9.18" y="19.98" width="3.78" height="8.64" fill="#7da9e0"/></g></svg>
<div style="position:absolute;left:1957.3px;top:1117px;width:1.8px;height:36px;background:linear-gradient(180deg,rgba(190,195,200,0) 0%,rgba(190,195,200,1) 28%,rgba(190,195,200,1) 72%,rgba(190,195,200,0) 100%);"></div>
<div style="position:absolute;left:1959.1px;top:1117px;width:1.2px;height:36px;background:linear-gradient(180deg,rgba(255,255,255,0) 0%,rgba(255,255,255,.9) 28%,rgba(255,255,255,.9) 72%,rgba(255,255,255,0) 100%);"></div>
<svg style="position:absolute;left:1973.5px;top:1119.5px;" width="42" height="28" viewBox="0 0 42 28"><rect x="0.7" y="2.2" width="27.5" height="24.5" rx="2.5" fill="#f6f8fb" stroke="#b9c0cc" stroke-width="1.2"/><path d="M1.3 7.2V4.7Q1.3 2.8 3.2 2.8H25.7Q27.6 2.8 27.6 4.7V7.2Z" fill="#d9dee8"/><path d="M1 7.5H28M1 14H28M1 20.3H28M10 7.5V26.5M19 7.5V26.5" stroke="#bcc2ce" stroke-width="1.1"/><path d="M17 17.5Q21 9.0 31 9.0V4.0L40.5 11.0L31 18.0V13.5Q23 13.5 17 17.5Z" fill="#52b38a"/></svg>
<span class="t" style="left:2021.80px;top:1119.17px;font-size:25px;color:#000;-webkit-text-stroke:0.35px;letter-spacing:0.731px;">Import Dataset</span>
<svg style="position:absolute;left:2211px;top:1133.5px;" width="11.4" height="6" viewBox="0 0 11.4 6"><path d="M0 0H11.4L5.7 6Z" fill="#111"/></svg>
<div style="position:absolute;left:2240.3px;top:1117px;width:1.8px;height:36px;background:linear-gradient(180deg,rgba(190,195,200,0) 0%,rgba(190,195,200,1) 28%,rgba(190,195,200,1) 72%,rgba(190,195,200,0) 100%);"></div>
<div style="position:absolute;left:2242.1px;top:1117px;width:1.2px;height:36px;background:linear-gradient(180deg,rgba(255,255,255,0) 0%,rgba(255,255,255,.9) 28%,rgba(255,255,255,.9) 72%,rgba(255,255,255,0) 100%);"></div>
<svg style="position:absolute;left:2255.5px;top:1120px;" width="28" height="28" viewBox="0 0 28 28"><circle cx="14" cy="14" r="13" fill="#e3e4e6"/><path d="M14 14L9.5 1.8A13 13 0 0 1 24.2 22Z" fill="#6b9f92"/><circle cx="14" cy="14" r="3.2" fill="#f4f7f9" opacity=".75"/></svg>
<span class="t" style="left:2297.60px;top:1119.17px;font-size:25px;color:#000;-webkit-text-stroke:0.35px;letter-spacing:-0.092px;">161 MiB</span>
<svg style="position:absolute;left:2406px;top:1133.5px;" width="11.4" height="6" viewBox="0 0 11.4 6"><path d="M0 0H11.4L5.7 6Z" fill="#111"/></svg>
<div style="position:absolute;left:2434.6000000000004px;top:1117px;width:1.8px;height:36px;background:linear-gradient(180deg,rgba(190,195,200,0) 0%,rgba(190,195,200,1) 28%,rgba(190,195,200,1) 72%,rgba(190,195,200,0) 100%);"></div>
<div style="position:absolute;left:2436.4px;top:1117px;width:1.2px;height:36px;background:linear-gradient(180deg,rgba(255,255,255,0) 0%,rgba(255,255,255,.9) 28%,rgba(255,255,255,.9) 72%,rgba(255,255,255,0) 100%);"></div>
<svg style="position:absolute;left:2449.5px;top:1114px;" width="38" height="36" viewBox="0 0 38 36"><path d="M35 2L21 19" stroke="#c8483e" stroke-width="3.2" stroke-linecap="round"/><path d="M17.5 15.5L25 21.5L20.5 31Q11 34 2.5 28Q12 24.5 17.5 15.5Z" fill="#e8c878" stroke="#c9a04a" stroke-width="1"/><path d="M16.5 17L24 23" stroke="#b9873a" stroke-width="2.2"/><path d="M8 27L14 22M12 29.5L18 23.5M16.5 30.5L21 25" stroke="#c9a04a" stroke-width=".9"/><ellipse cx="17" cy="33" rx="13" ry="1.6" fill="#000" opacity=".08"/></svg>
<svg style="position:absolute;left:2801px;top:1122.6px;" width="25" height="24" viewBox="0 0 25 24"><path d="M0 1.5H24M0 8H24M0 14.5H24M0 21H24" stroke="#b5b8bc" stroke-width="1.8"/></svg>
<span class="t" style="left:2840.20px;top:1119.08px;font-size:25px;color:#000;-webkit-text-stroke:0.35px;letter-spacing:-0.125px;">List</span>
<svg style="position:absolute;left:2895.2px;top:1133px;" width="11.4" height="6" viewBox="0 0 11.4 6"><path d="M0 0H11.4L5.7 6Z" fill="#111"/></svg>
<div style="position:absolute;left:2923.1000000000004px;top:1115px;width:1.8px;height:38px;background:linear-gradient(180deg,rgba(190,195,200,0) 0%,rgba(190,195,200,1) 28%,rgba(190,195,200,1) 72%,rgba(190,195,200,0) 100%);"></div>
<div style="position:absolute;left:2924.9px;top:1115px;width:1.2px;height:38px;background:linear-gradient(180deg,rgba(255,255,255,0) 0%,rgba(255,255,255,.9) 28%,rgba(255,255,255,.9) 72%,rgba(255,255,255,0) 100%);"></div>
<svg style="position:absolute;left:2940px;top:1116px;" width="32" height="33" viewBox="0 0 32 33"><path d="M21.5 9.2A10.6 10.6 0 1 0 26.6 19.5" fill="none" stroke="#c3c9de" stroke-width="8"/><path d="M21.5 9.2A10.6 10.6 0 1 0 26.6 19.5" fill="none" stroke="#e6eaf7" stroke-width="5.8"/><path d="M16.2 14.6L29.6 1V15.4Z" fill="#e6eaf7" stroke="#c3c9de" stroke-width="1.1" stroke-linejoin="round"/></svg>
<svg style="position:absolute;left:2982.8px;top:1133px;" width="11.4" height="6" viewBox="0 0 11.4 6"><path d="M0 0H11.4L5.7 6Z" fill="#111"/></svg>
<span class="t" style="left:1856.50px;top:1164.97px;font-size:25px;color:#000;-webkit-text-stroke:0.35px;">R</span>
<svg style="position:absolute;left:1887.4px;top:1180.5px;" width="11.4" height="6" viewBox="0 0 11.4 6"><path d="M0 0H11.4L5.7 6Z" fill="#111"/></svg>
<div style="position:absolute;left:1915.2px;top:1164px;width:1.8px;height:36px;background:linear-gradient(180deg,rgba(190,195,200,0) 0%,rgba(190,195,200,1) 28%,rgba(190,195,200,1) 72%,rgba(190,195,200,0) 100%);"></div>
<div style="position:absolute;left:1917.0px;top:1164px;width:1.2px;height:36px;background:linear-gradient(180deg,rgba(255,255,255,0) 0%,rgba(255,255,255,.9) 28%,rgba(255,255,255,.9) 72%,rgba(255,255,255,0) 100%);"></div>
<svg style="position:absolute;left:1935px;top:1165.3px;" width="34" height="32" viewBox="0 0 34 32"><rect x="6.5" y="0.5" width="19.5" height="19" rx="3.5" fill="#b66bc4"/><rect x="13" y="11" width="20" height="20" rx="3.5" fill="#6f9be6"/><rect x="0.5" y="6.5" width="19.5" height="19" rx="3.5" fill="#a9c47f"/></svg>
<span class="t" style="left:1980.00px;top:1164.97px;font-size:25px;color:#000;-webkit-text-stroke:0.35px;letter-spacing:0.487px;">Global Environment</span>
<svg style="position:absolute;left:2224px;top:1180.5px;" width="11.4" height="6" viewBox="0 0 11.4 6"><path d="M0 0H11.4L5.7 6Z" fill="#111"/></svg>
<div style="position:absolute;left:2717.5px;top:1165.5px;width:266.5px;height:38px;background:#fff;border:1.6px solid #d3d3d3;border-radius:7px;box-sizing:border-box;"></div>
<svg style="position:absolute;left:2731.5px;top:1171px;" width="29.400000000000002" height="29.400000000000002" viewBox="0 0 28 28"><circle cx="10.5" cy="10.5" r="7.6" fill="none" stroke="#a3a7ad" stroke-width="4.2"/><path d="M16.5 16.5L25 25" stroke="#a3a7ad" stroke-width="5" stroke-linecap="butt"/></svg>
<span class="t" style="left:2199.40px;top:1355.09px;font-size:43px;color:#555;-webkit-text-stroke:0.35px;letter-spacing:1.612px;">Environment is empty</span>
<div style="position:absolute;left:2502px;top:179.5px;width:520px;height:667px;box-sizing:border-box;background:#fff;border:2px solid #a3aab3;box-shadow:0 7px 16px rgba(0,0,0,.22),0 2px 4px rgba(0,0,0,.12)"></div>
<div style="position:absolute;left:2514.8px;top:243px;width:495px;height:2px;background:#b5b5b5;"></div>
<div style="position:absolute;left:2514.8px;top:405px;width:495px;height:2px;background:#b5b5b5;"></div>
<div style="position:absolute;left:2514.8px;top:715.4px;width:495px;height:2px;background:#b5b5b5;"></div>
<div style="position:absolute;left:2514.8px;top:778px;width:495px;height:2px;background:#b5b5b5;"></div>
<div style="position:absolute;left:2512px;top:414px;width:500px;height:48.6px;background:#d9e8f7;"></div>
<svg style="position:absolute;left:2520px;top:196.5px;" width="46" height="36" viewBox="0 0 46 36"><g opacity="1"><path d="M26.0 3.0L42.0 8.0L42.0 27.0L26.0 34.0L10.0 27.0L10.0 8.0Z" fill="#c5e0f4" stroke="#8ec3e6" stroke-width="1"/><path d="M26.0 3.0L42.0 8.0L42.0 27.0L26.0 34.0Z" fill="#b4d5f1" opacity=".8"/><path d="M10.0 27.0L26.0 22.0L42.0 27.0L26.0 34.0Z" fill="#a9d6ec" opacity=".7"/><path d="M26.0 3.0V34.0M10.0 8.0L26.0 13.0L42.0 8.0M10.0 27.0L26.0 22.0L42.0 27.0" fill="none" stroke="#7dbbe0" stroke-width=".9"/><text x="26.0" y="22.5" font-family="Liberation Serif, serif" font-size="19.0" fill="#3559b0" text-anchor="middle">R</text></g><circle cx="11" cy="11.8" r="11" fill="#000" opacity=".15"/><circle cx="11" cy="11" r="11" fill="#48a877"/><path d="M4.18 8.8H8.8V4.18H13.2V8.8H17.82V13.2H13.2V17.82H8.8V13.2H4.18Z" fill="#fff"/></svg>
<svg style="position:absolute;left:2520.5px;top:263.5px;" width="46" height="30" viewBox="0 0 46 30"><defs><linearGradient id="gfb" x1="0" y1="0" x2="0" y2="1"><stop offset="0" stop-color="#7eb3e6"/><stop offset="1" stop-color="#5a98d8"/></linearGradient></defs><path d="M5 26V7Q5 5 7 5H12L15 2H27Q30 2 30.5 5V26Z" fill="#dfe6ee" stroke="#8da6c4" stroke-width="1.3"/><path d="M0.7 13H24Q25.5 13 26 14.5L31 26.3H6.5Q5 26.3 4.5 24.8Z" fill="url(#gfb)" stroke="#4b86c6" stroke-width="1.2" stroke-linejoin="round"/><path d="M20.5 13.5Q24.5 5.0 34.5 5.0V0.0L44.0 7.0L34.5 14.0V9.5Q26.5 9.5 20.5 13.5Z" fill="#52b38a"/></svg>
<span class="t" style="left:2576.60px;top:200.37px;font-size:27px;color:#000;-webkit-text-stroke:0.35px;letter-spacing:0.446px;">New Project...</span>
<span class="t" style="left:2576.60px;top:262.76px;font-size:27px;color:#000;-webkit-text-stroke:0.35px;letter-spacing:0.491px;">Open Project...</span>
<span class="t" style="left:2576.60px;top:312.17px;font-size:27px;color:#000;-webkit-text-stroke:0.35px;letter-spacing:0.475px;">Open Project in New Session...</span>
<span class="t" style="left:2576.60px;top:361.76px;font-size:27px;color:#8a8a8a;-webkit-text-stroke:0.35px;letter-spacing:0.398px;">Close Project</span>
<span class="t" style="left:2577.00px;top:423.37px;font-size:27px;color:#000;-webkit-text-stroke:0.35px;letter-spacing:1.497px;">ec421-ps1</span>
<span class="t" style="left:2577.00px;top:473.37px;font-size:27px;color:#000;-webkit-text-stroke:0.35px;letter-spacing:0.833px;">example</span>
<span class="t" style="left:2577.00px;top:522.87px;font-size:27px;color:#000;-webkit-text-stroke:0.35px;letter-spacing:1.491px;">example-project</span>
<span class="t" style="left:2577.00px;top:572.66px;font-size:27px;color:#000;-webkit-text-stroke:0.35px;letter-spacing:2.073px;">07-rubin-ucsb</span>
<span class="t" style="left:2577.00px;top:622.07px;font-size:27px;color:#000;-webkit-text-stroke:0.35px;letter-spacing:0.700px;">002</span>
<span class="t" style="left:2577.00px;top:671.87px;font-size:27px;color:#000;-webkit-text-stroke:0.35px;letter-spacing:1.858px;">20230407-uo-recruitment</span>
<span class="t" style="left:2576.60px;top:734.76px;font-size:27px;color:#000;-webkit-text-stroke:0.35px;letter-spacing:0.469px;">Clear Project List</span>
<span class="t" style="left:2576.60px;top:797.07px;font-size:27px;color:#8a8a8a;-webkit-text-stroke:0.35px;letter-spacing:0.740px;">Project Options...</span>
<svg style="position:absolute;left:2961.5px;top:426.3px;" width="34" height="27" viewBox="0 0 34 27"><path d="M9.5 24V5Q9.5 0.7 14 0.7H28Q32.5 0.7 32.5 5V24Z" fill="#f9fbfd" stroke="#a9b9cc" stroke-width="1.2"/><path d="M10 7V5Q10 1.2 14 1.2H28Q32 1.2 32 5V7Z" fill="#d6e8fa"/><path d="M10 7.3H32" stroke="#c3d6ea" stroke-width=".8"/><path d="M8 9.5H15.3V17L12.6 14.4L3.8 23.2L1 20.4L9.8 11.6Z" fill="#dfe3e7" stroke="#9aa3ad" stroke-width="1.1" stroke-linejoin="round"/></svg>
<svg style="position:absolute;left:2961.5px;top:475.90000000000003px;" width="34" height="27" viewBox="0 0 34 27"><path d="M9.5 24V5Q9.5 0.7 14 0.7H28Q32.5 0.7 32.5 5V24Z" fill="#f9fbfd" stroke="#a9b9cc" stroke-width="1.2"/><path d="M10 7V5Q10 1.2 14 1.2H28Q32 1.2 32 5V7Z" fill="#d6e8fa"/><path d="M10 7.3H32" stroke="#c3d6ea" stroke-width=".8"/><path d="M8 9.5H15.3V17L12.6 14.4L3.8 23.2L1 20.4L9.8 11.6Z" fill="#dfe3e7" stroke="#9aa3ad" stroke-width="1.1" stroke-linejoin="round"/></svg>
<svg style="position:absolute;left:2961.5px;top:525.5px;" width="34" height="27" viewBox="0 0 34 27"><path d="M9.5 24V5Q9.5 0.7 14 0.7H28Q32.5 0.7 32.5 5V24Z" fill="#f9fbfd" stroke="#a9b9cc" stroke-width="1.2"/><path d="M10 7V5Q10 1.2 14 1.2H28Q32 1.2 32 5V7Z" fill="#d6e8fa"/><path d="M10 7.3H32" stroke="#c3d6ea" stroke-width=".8"/><path d="M8 9.5H15.3V17L12.6 14.4L3.8 23.2L1 20.4L9.8 11.6Z" fill="#dfe3e7" stroke="#9aa3ad" stroke-width="1.1" stroke-linejoin="round"/></svg>
<svg style="position:absolute;left:2961.5px;top:575.1px;" width="34" height="27" viewBox="0 0 34 27"><path d="M9.5 24V5Q9.5 0.7 14 0.7H28Q32.5 0.7 32.5 5V24Z" fill="#f9fbfd" stroke="#a9b9cc" stroke-width="1.2"/><path d="M10 7V5Q10 1.2 14 1.2H28Q32 1.2 32 5V7Z" fill="#d6e8fa"/><path d="M10 7.3H32" stroke="#c3d6ea" stroke-width=".8"/><path d="M8 9.5H15.3V17L12.6 14.4L3.8 23.2L1 20.4L9.8 11.6Z" fill="#dfe3e7" stroke="#9aa3ad" stroke-width="1.1" stroke-linejoin="round"/></svg>
<svg style="position:absolute;left:2961.5px;top:624.7px;" width="34" height="27" viewBox="0 0 34 27"><path d="M9.5 24V5Q9.5 0.7 14 0.7H28Q32.5 0.7 32.5 5V24Z" fill="#f9fbfd" stroke="#a9b9cc" stroke-width="1.2"/><path d="M10 7V5Q10 1.2 14 1.2H28Q32 1.2 32 5V7Z" fill="#d6e8fa"/><path d="M10 7.3H32" stroke="#c3d6ea" stroke-width=".8"/><path d="M8 9.5H15.3V17L12.6 14.4L3.8 23.2L1 20.4L9.8 11.6Z" fill="#dfe3e7" stroke="#9aa3ad" stroke-width="1.1" stroke-linejoin="round"/></svg>
<svg style="position:absolute;left:2961.5px;top:674.3px;" width="34" height="27" viewBox="0 0 34 27"><path d="M9.5 24V5Q9.5 0.7 14 0.7H28Q32.5 0.7 32.5 5V24Z" fill="#f9fbfd" stroke="#a9b9cc" stroke-width="1.2"/><path d="M10 7V5Q10 1.2 14 1.2H28Q32 1.2 32 5V7Z" fill="#d6e8fa"/><path d="M10 7.3H32" stroke="#c3d6ea" stroke-width=".8"/><path d="M8 9.5H15.3V17L12.6 14.4L3.8 23.2L1 20.4L9.8 11.6Z" fill="#dfe3e7" stroke="#9aa3ad" stroke-width="1.1" stroke-linejoin="round"/></svg>
<svg style="position:absolute;left:2943.5px;top:800px;" width="60" height="26" viewBox="0 0 60 26"><path d="M9.5 1.5L18 11H13.8V20.5H5.2V11H1Z" fill="none" stroke="#8a8a8a" stroke-width="1.9" stroke-linejoin="miter"/><path d="M30.5 7.5H40.5V17.5H30.5ZM30.5 7.5H27.5A3 3 0 1 1 30.5 4.5ZM40.5 7.5V4.5A3 3 0 1 1 43.5 7.5ZM40.5 17.5H43.5A3 3 0 1 1 40.5 20.5ZM30.5 17.5V20.5A3 3 0 1 1 27.5 17.5Z" fill="none" stroke="#8a8a8a" stroke-width="2"/><path d="M53.5 17.2H56.6V20Q56.6 23 54 24.6L53.2 23.6Q54.8 22.4 54.8 20.6H53.5Z" fill="#8a8a8a"/></svg>
<svg style="position:absolute;left:2744px;top:442.3px;" width="52" height="70" viewBox="0 0 52 70"><defs><filter id="cs" x="-30%" y="-30%" width="170%" height="170%"><feGaussianBlur stdDeviation="2.2"/></filter></defs><g transform="translate(8,6)"><path d="M-2 1.5Q-2 -2.5 1 0.3L28.5 27.3Q31.5 30.5 27 31.5L20.8 33L25.2 44.5Q26.6 48.5 23 50.2Q19.2 51.8 17.2 48L11.8 36.8L4.6 42Q-2 45.5 -2 39Z" fill="#000" opacity=".3" filter="url(#cs)" transform="translate(1.5,3)"/><path d="M-2 1.5Q-2 -2.5 1 0.3L28.5 27.3Q31.5 30.5 27 31.5L20.8 33L25.2 44.5Q26.6 48.5 23 50.2Q19.2 51.8 17.2 48L11.8 36.8L4.6 42Q-2 45.5 -2 39Z" fill="#ff7f7c"/></g></svg>
</div></body></html>
